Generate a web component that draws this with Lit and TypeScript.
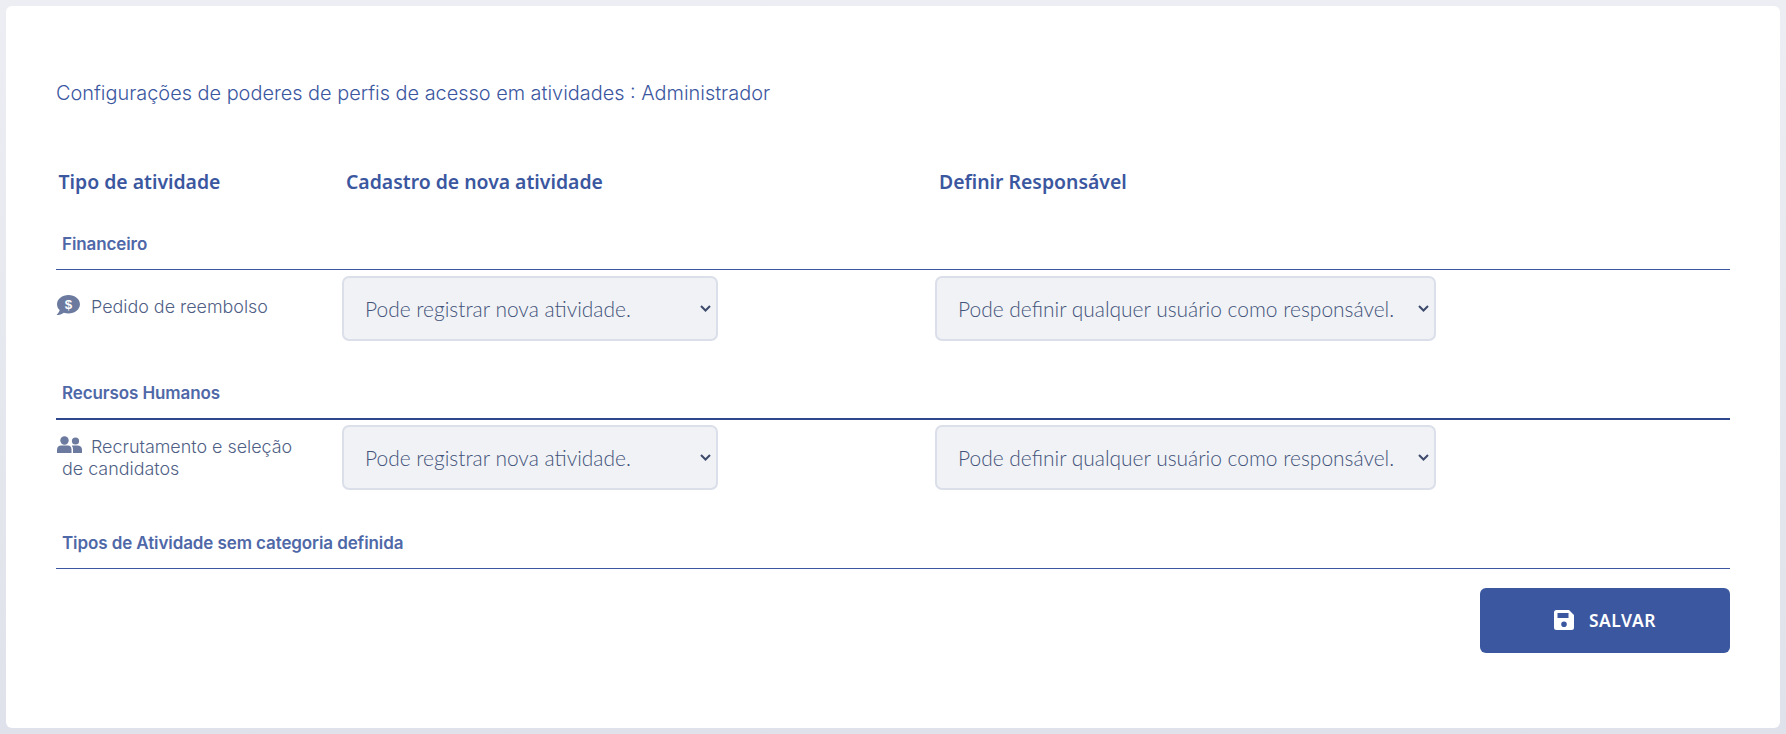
import { LitElement, html, css, unsafeCSS } from "lit";
import { customElement } from "lit/decorators.js";

const chevron = unsafeCSS("url(\"data:image/svg+xml,%3Csvg xmlns='http://www.w3.org/2000/svg' width='11' height='7' viewBox='0 0 11 7'%3E%3Cpath d='M1 1l4.500 4.500L10 1' fill='none' stroke='%233d4a6b' stroke-width='2'/%3E%3C/svg%3E\")");
const activitySelect = html`<select class="sel act"><option>Pode registrar nova atividade.</option></select>`;
const ownerSelect = html`<select class="sel own"><option>Pode definir qualquer usuário como responsável.</option></select>`;

@customElement("app-root")
export class AppRoot extends LitElement {
  static styles = css`
    :host { display: block; height: 734px; box-sizing: border-box; padding: 6px;
      background: linear-gradient(#eceef3, #dfe2ea); font-family: "Inter", sans-serif; }
    .card { background: #fff; height: 722px; box-sizing: border-box; border-radius: 6px; padding: 0 50px; color: #3b57a0; }
    .title { margin: 0; padding-top: 75px; height: 24px; line-height: 24px; font-size: 19.9px; font-weight: 300; color: #3b57a0; }
    .heads { display: grid; grid-template-columns: 287.500px 593px 1fr; margin-top: 65px; padding-left: 2.500px; height: 24px; line-height: 24px;
      font-family: "Noto Sans", sans-serif; font-weight: 600; font-size: 19.4px; color: #3b57a0; }
    .cat { padding-left: 6px; height: 36px; line-height: 23px; font-size: 17px; font-weight: 600; letter-spacing: -0.1px; color: #4f68a8; border-bottom: 1px solid #3b57a0; }
    .cat.thick { border-bottom-width: 2px; border-bottom-color: #2f478c; }
    .first { margin-top: 39px; }
    .row { display: grid; grid-template-columns: 286px 593px 1fr; padding-top: 6px; height: 65px; margin-bottom: 41px; }
    .row.r2 { padding-top: 5px; margin-bottom: 42px; }
    .label { font-size: 17.9px; font-weight: 300; line-height: 22px; color: #4f5f85; padding-left: 6px; }
    .label.one { padding-top: 20px; padding-left: 0; display: flex; align-items: flex-start; gap: 11px; }
    .label.one svg { margin-top: -1px; }
    .label.two { padding-top: 11px; }
    .label.two svg { margin: 0 9px 0 -5px; vertical-align: -1px; }
    .sel { appearance: none; height: 65px; box-sizing: border-box; background: #f0f2f6 ${chevron} no-repeat right 5px center; border: 2px solid #dbdfe9; border-radius: 7px;
      padding: 0 0 0 21px; font-family: "Lato", sans-serif; font-size: 20.95px; font-weight: 300; color: #435379; }
    .act { width: 376px; }
    .own { width: 501px; }
    .foot { display: flex; justify-content: flex-end; margin-top: 19px; }
    .save { width: 250px; height: 65px; border: 0; border-radius: 6px; background: #3b57a0; color: #fff; display: flex; align-items: center; justify-content: center; gap: 15px;
      font-family: "Noto Sans", sans-serif; font-weight: 600; font-size: 17.4px; letter-spacing: 0.6px; padding: 0 0 2px; }
  `;

  render() {
    return html`<div class="card">
      <h1 class="title">Configurações de poderes de perfis de acesso em atividades : Administrador</h1>
      <div class="heads"><div>Tipo de atividade</div><div>Cadastro de nova atividade</div><div>Definir Responsável</div></div>
      <div class="cat first">Financeiro</div>
      <div class="row">
        <div class="label one">
          <svg width="24" height="21" viewBox="0 0 25 22"><path fill="#6b7a9e" d="M13 0C6.400 0 1 4.200 1 9.600c0 2.400 1 4.500 2.800 6.200C3.200 18 1.800 19.700.5 21c2.900 0 5.600-1 7.600-2.500 1.500.5 3.100.8 4.900.8 6.600 0 12-4.300 12-9.700S19.600 0 13 0z"/><text x="13" y="14.500" text-anchor="middle" font-size="14" font-weight="700" font-family="Liberation Sans" fill="#fff">$</text></svg>
          <span>Pedido de reembolso</span>
        </div>
        <div>${activitySelect}</div>
        <div>${ownerSelect}</div>
      </div>
      <div class="cat thick">Recursos Humanos</div>
      <div class="row r2">
        <div class="label two">
          <svg width="25" height="18" viewBox="0 0 25 18"><g fill="#6b7a9e"><circle cx="7.500" cy="4.500" r="4.200"/><circle cx="18.500" cy="5" r="3.600"/><path d="M0 17v-3.500C0 11 2 9.500 4 9.500h7c2 0 3.500 1.500 3.500 4V17z"/><path d="M16 17v-4c0-1.300-.4-2.400-1.200-3.300.6-.2 1.200-.2 1.700-.2h4c2.400 0 4.500 1.500 4.500 4V17z"/></g></svg>Recrutamento e seleção<br />de candidatos
        </div>
        <div>${activitySelect}</div>
        <div>${ownerSelect}</div>
      </div>
      <div class="cat">Tipos de Atividade sem categoria definida</div>
      <div class="foot">
        <button class="save">
          <svg width="20" height="20" viewBox="0 0 20 20"><path fill="#fff" fill-rule="evenodd" d="M2.500 0H15l5 5v12.500a2.500 2.500 0 0 1-2.500 2.500h-15A2.500 2.500 0 0 1 0 17.500v-15A2.500 2.500 0 0 1 2.500 0zM3.500 3v5h11V3zM10 11.500a2.800 2.800 0 1 0 0 5.600 2.800 2.800 0 0 0 0-5.600z"/></svg>
          SALVAR
        </button>
      </div>
    </div>`;
  }
}
